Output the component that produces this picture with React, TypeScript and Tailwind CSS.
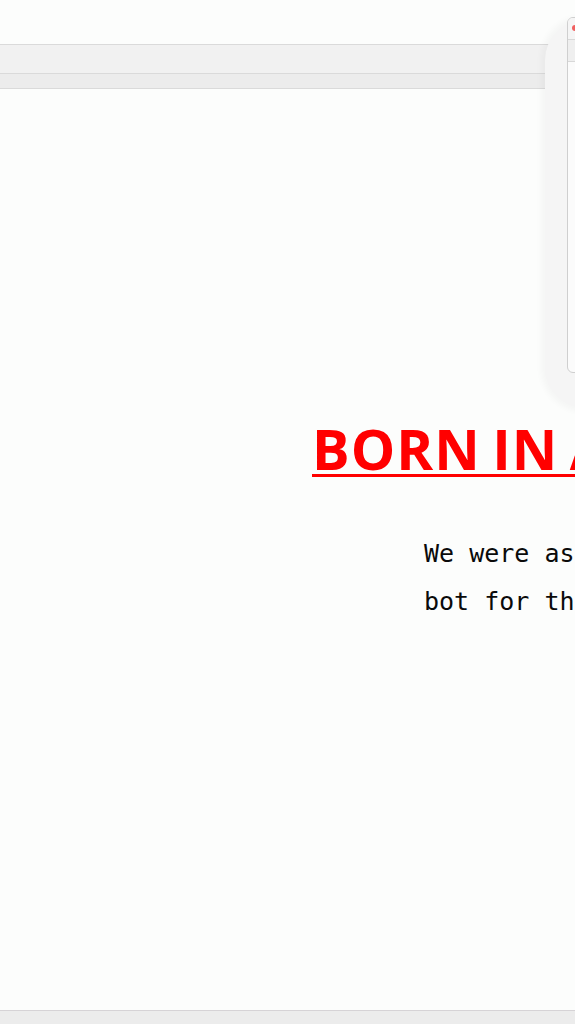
import React from "react";

export default function App() {
  return (
    <div className="relative w-[575px] h-[1024px] overflow-hidden bg-[#fcfdfc]">
      <div className="h-[44px]" />
      <div className="border-t border-[#dadada] h-[29px] bg-[#f1f1f1]" />
      <div className="border-t border-[#dadada] h-[16px] bg-[#ececec] border-b" />
      <div className="pt-[331px] pl-[312px] whitespace-nowrap">
        <h1
          className="text-[56px] leading-[56px] font-bold text-[#ff0000] underline decoration-[3px] underline-offset-[4px] tracking-[1px] [word-spacing:-4px]"
          style={{ fontFamily: '"Open Sans", sans-serif' }}
        >
          BORN IN A LAB
        </h1>
        <div
          className="mt-[54px] ml-[112px] text-[25px] leading-[48px] text-[#0a0a0a]"
          style={{ fontFamily: '"DejaVu Sans Mono", monospace' }}
        >
          <p>We were asked to build a</p>
          <p>bot for the web</p>
        </div>
      </div>
      <div className="absolute left-0 right-0 bottom-0 h-[14px] bg-[#ececec] border-t border-[#d6d3d6]" />
      {/* window on right */}
      <div className="absolute left-[545px] top-[20px] w-[80px] h-[388px] rounded-[40px] bg-[#f5f5f5] shadow-[0_0_6px_4px_rgba(0,0,0,0.03)]" />
      <div className="absolute left-[567px] top-[17px] w-[40px] h-[356px] rounded-[6px] bg-[#fbfbfb] border border-[#cfcfcf] overflow-hidden">
        <div className="h-[21px] bg-[#f5f5f5] relative">
          <div className="absolute left-[4px] top-[7px] w-[6px] h-[6px] rounded-full bg-[#f06060]" />
        </div>
        <div className="h-[23px] bg-[#efefef] border-t border-[#d8d8d8] border-b" />
      </div>
    </div>
  );
}
